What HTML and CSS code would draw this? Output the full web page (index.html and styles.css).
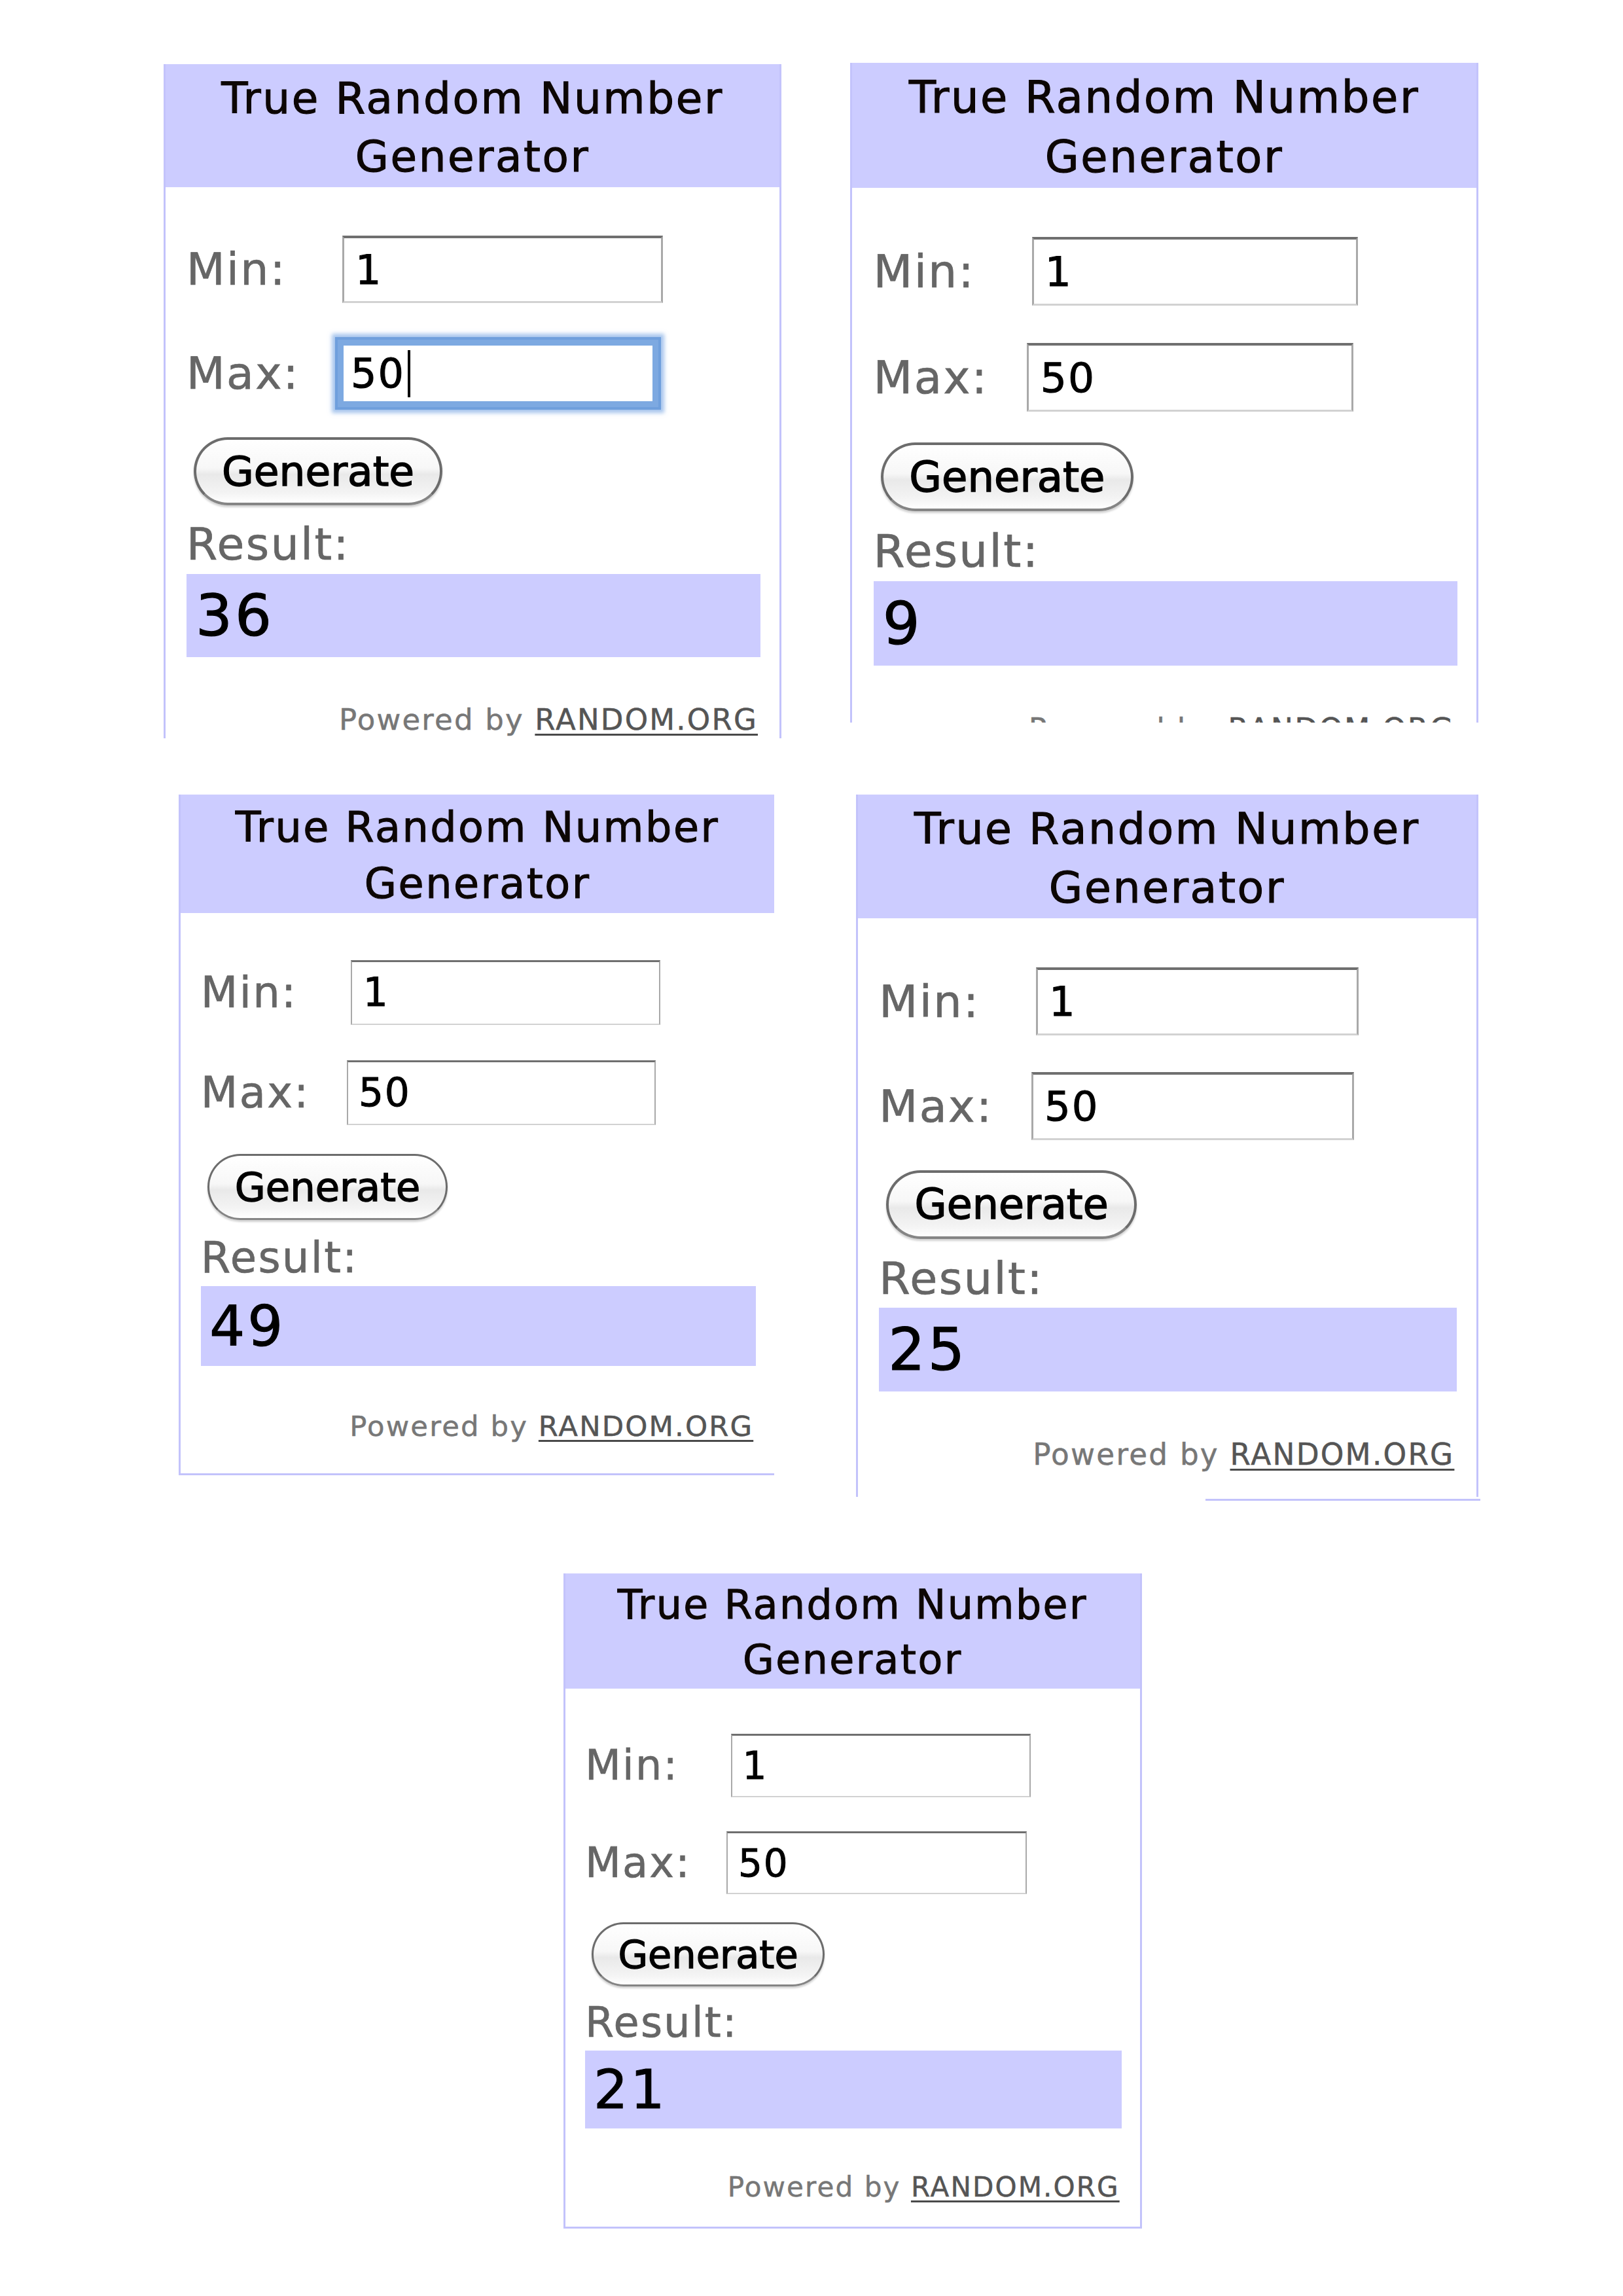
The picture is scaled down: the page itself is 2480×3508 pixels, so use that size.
FILE: index.html
```html
<!DOCTYPE html>
<html lang="en">
<head>
<meta charset="utf-8">
<title>True Random Number Generator results</title>
<link rel="stylesheet" href="styles.css">
</head>
<body>
<main class="sheet">
  <section class="row row--top">
    <div class="rng rng--a">
      <div class="rng-head">True Random Number<br>Generator</div>
      <div class="rng-body">
        <div class="rng-row"><span class="rng-label rng-label--min">Min:</span><div class="rng-input">1</div></div>
        <div class="rng-row rng-row--max"><span class="rng-label rng-label--max">Max:</span><div class="rng-input rng-input--focus">50<span class="rng-caret"></span></div></div>
        <div class="rng-btn">Generate</div>
        <div class="rng-label rng-result-label">Result:</div>
        <div class="rng-result">36</div>
        <div class="rng-powered">Powered by <span class="rng-link">RANDOM.ORG</span></div>
      </div>
    </div>
    <div class="rng rng--b">
      <div class="rng-head">True Random Number<br>Generator</div>
      <div class="rng-body">
        <div class="rng-row"><span class="rng-label rng-label--min">Min:</span><div class="rng-input">1</div></div>
        <div class="rng-row rng-row--max"><span class="rng-label rng-label--max">Max:</span><div class="rng-input">50</div></div>
        <div class="rng-btn">Generate</div>
        <div class="rng-label rng-result-label">Result:</div>
        <div class="rng-result">9</div>
        <div class="rng-powered">Powered by <span class="rng-link">RANDOM.ORG</span></div>
      </div>
    </div>
  </section>

  <section class="row row--middle">
    <div class="rng rng--c">
      <div class="rng-head">True Random Number<br>Generator</div>
      <div class="rng-body">
        <div class="rng-row"><span class="rng-label rng-label--min">Min:</span><div class="rng-input">1</div></div>
        <div class="rng-row rng-row--max"><span class="rng-label rng-label--max">Max:</span><div class="rng-input">50</div></div>
        <div class="rng-btn">Generate</div>
        <div class="rng-label rng-result-label">Result:</div>
        <div class="rng-result">49</div>
        <div class="rng-powered">Powered by <span class="rng-link">RANDOM.ORG</span></div>
      </div>
    </div>
    <div class="stack">
      <div class="rng rng--d">
        <div class="rng-head">True Random Number<br>Generator</div>
        <div class="rng-body">
          <div class="rng-row"><span class="rng-label rng-label--min">Min:</span><div class="rng-input">1</div></div>
          <div class="rng-row rng-row--max"><span class="rng-label rng-label--max">Max:</span><div class="rng-input">50</div></div>
          <div class="rng-btn">Generate</div>
          <div class="rng-label rng-result-label">Result:</div>
          <div class="rng-result">25</div>
          <div class="rng-powered">Powered by <span class="rng-link">RANDOM.ORG</span></div>
        </div>
      </div>
      <div class="rng-edge"></div>
    </div>
  </section>

  <section class="row row--bottom">
    <div class="rng rng--e">
      <div class="rng-head">True Random Number<br>Generator</div>
      <div class="rng-body">
        <div class="rng-row"><span class="rng-label rng-label--min">Min:</span><div class="rng-input">1</div></div>
        <div class="rng-row rng-row--max"><span class="rng-label rng-label--max">Max:</span><div class="rng-input">50</div></div>
        <div class="rng-btn">Generate</div>
        <div class="rng-label rng-result-label">Result:</div>
        <div class="rng-result">21</div>
        <div class="rng-powered">Powered by <span class="rng-link">RANDOM.ORG</span></div>
      </div>
    </div>
  </section>
</main>
</body>
</html>
```

FILE: styles.css
```css
html, body {
  margin: 0;
  padding: 0;
  background: #ffffff;
}

body {
  font-family: "DejaVu Sans", Verdana, sans-serif;
  color: #000;
}

.sheet {
  width: 2480px;
  height: 3508px;
  padding-top: 96px;
  box-sizing: border-box;
  overflow: hidden;
}

.row {
  display: flex;
  align-items: flex-start;
}

.row--top {
  padding-left: 250px;
  gap: 105px;
}

.row--middle {
  padding-left: 273px;
  gap: 125px;
  margin-top: 86px;
}

.row--bottom {
  padding-left: 861px;
  margin-top: 111px;
}

.stack {
  display: flex;
  flex-direction: column;
}

/* ---------- widget ---------- */
.rng {
  --u: 1;
  --line: #c3c3fb;
  box-sizing: border-box;
  width: calc(944px * var(--u));
  border-left: 3px solid var(--line);
  border-right: 3px solid var(--line);
  background: #fff;
  overflow: hidden;
  flex: none;
}

.rng--a { --u: 1;     height: 1030px; margin-top: 2px; }
.rng--b { --u: 1.017; height: 1008px; }
.rng--c { --u: 0.964; height: 1040px; border-right: 0; border-bottom: 3px solid var(--line); }
.rng--d { --u: 1.007; height: 1073px; }
.rng--e { --u: 0.936; height: 1001px; border-bottom: 3px solid var(--line); }

.rng-edge {
  width: 420px;
  height: 3px;
  margin-top: 3px;
  margin-left: 534px;
  background: #c3c3fb;
}

.rng-head {
  box-sizing: border-box;
  height: calc(188px * var(--u));
  margin: 0 -3px;
  padding-top: calc(8px * var(--u));
  background: #ccccff;
  text-align: center;
  font-size: calc(66px * var(--u));
  line-height: calc(89px * var(--u));
  letter-spacing: calc(2.6px * var(--u));
  color: #0c0604;
  -webkit-text-stroke: calc(1.1px * var(--u)) #0c0604;
}

.rng-body {
  padding: calc(74px * var(--u)) calc(29px * var(--u)) 0 calc(32px * var(--u));
}

.rng-row {
  display: flex;
  align-items: center;
  height: calc(103px * var(--u));
}

.rng-row--max {
  margin-top: calc(56px * var(--u));
}

.rng-label {
  font-size: calc(68px * var(--u));
  letter-spacing: calc(2.4px * var(--u));
  color: #666;
  -webkit-text-stroke: calc(0.7px * var(--u)) #666;
  flex: none;
}

.rng-label--min { width: calc(238px * var(--u)); }
.rng-label--max { width: calc(231px * var(--u)); }

.rng-input {
  box-sizing: border-box;
  display: flex;
  align-items: center;
  width: calc(490px * var(--u));
  height: calc(103px * var(--u));
  padding-left: calc(17px * var(--u));
  border-top: calc(4px * var(--u)) solid #6f6f6f;
  border-left: calc(3px * var(--u)) solid #a9a9a9;
  border-right: calc(3px * var(--u)) solid #a9a9a9;
  border-bottom: calc(3px * var(--u)) solid #d2d2d2;
  background: #fff;
  font-size: calc(62px * var(--u));
  letter-spacing: calc(2px * var(--u));
  color: #000;
  -webkit-text-stroke: calc(1px * var(--u)) #000;
}

.rng-input--focus {
  border: 0;
  box-shadow:
    inset 0 0 0 calc(9px * var(--u)) #7da9e1,
    0 0 0 calc(4px * var(--u)) #6f9fdc,
    0 0 calc(6px * var(--u)) calc(9px * var(--u)) rgba(130, 172, 230, 0.7);
  padding-left: calc(20px * var(--u));
}

.rng-caret {
  display: inline-block;
  width: calc(4px * var(--u));
  height: calc(72px * var(--u));
  margin-left: calc(4px * var(--u));
  background: #000;
}

.rng-btn {
  box-sizing: border-box;
  display: flex;
  align-items: center;
  justify-content: center;
  width: calc(380px * var(--u));
  height: calc(104px * var(--u));
  margin-top: calc(46px * var(--u));
  margin-left: calc(11px * var(--u));
  border: calc(4px * var(--u)) solid #6c6c6c;
  border-bottom-color: #858585;
  border-radius: calc(52px * var(--u));
  background: linear-gradient(#ffffff 0%, #f7f7f7 45%, #e9e9e9 55%, #f4f4f4 85%, #ffffff 100%);
  box-shadow: 0 calc(3px * var(--u)) calc(3px * var(--u)) rgba(0, 0, 0, 0.18);
  font-size: calc(63px * var(--u));
  color: #000;
  -webkit-text-stroke: calc(1.4px * var(--u)) #000;
}

.rng-result-label {
  display: block;
  margin-top: calc(22px * var(--u));
  line-height: calc(76px * var(--u));
}

.rng-result {
  box-sizing: border-box;
  display: flex;
  align-items: center;
  height: calc(127px * var(--u));
  margin-top: calc(7px * var(--u));
  padding-left: calc(14px * var(--u));
  background: #ccccff;
  font-size: calc(88px * var(--u));
  letter-spacing: calc(4px * var(--u));
  color: #000;
  -webkit-text-stroke: calc(1.2px * var(--u)) #000;
}

.rng-powered {
  margin-top: calc(66px * var(--u));
  padding-right: calc(4px * var(--u));
  text-align: right;
  font-size: calc(45px * var(--u));
  line-height: calc(60px * var(--u));
  letter-spacing: calc(2.2px * var(--u));
  color: #777;
  -webkit-text-stroke: calc(0.5px * var(--u)) #777;
}

.rng-link {
  color: #555;
  -webkit-text-stroke: calc(0.5px * var(--u)) #555;
  text-decoration: underline;
  text-decoration-thickness: calc(3px * var(--u));
  text-underline-offset: calc(6px * var(--u));
  text-decoration-color: #4a4a4a;
}
```
